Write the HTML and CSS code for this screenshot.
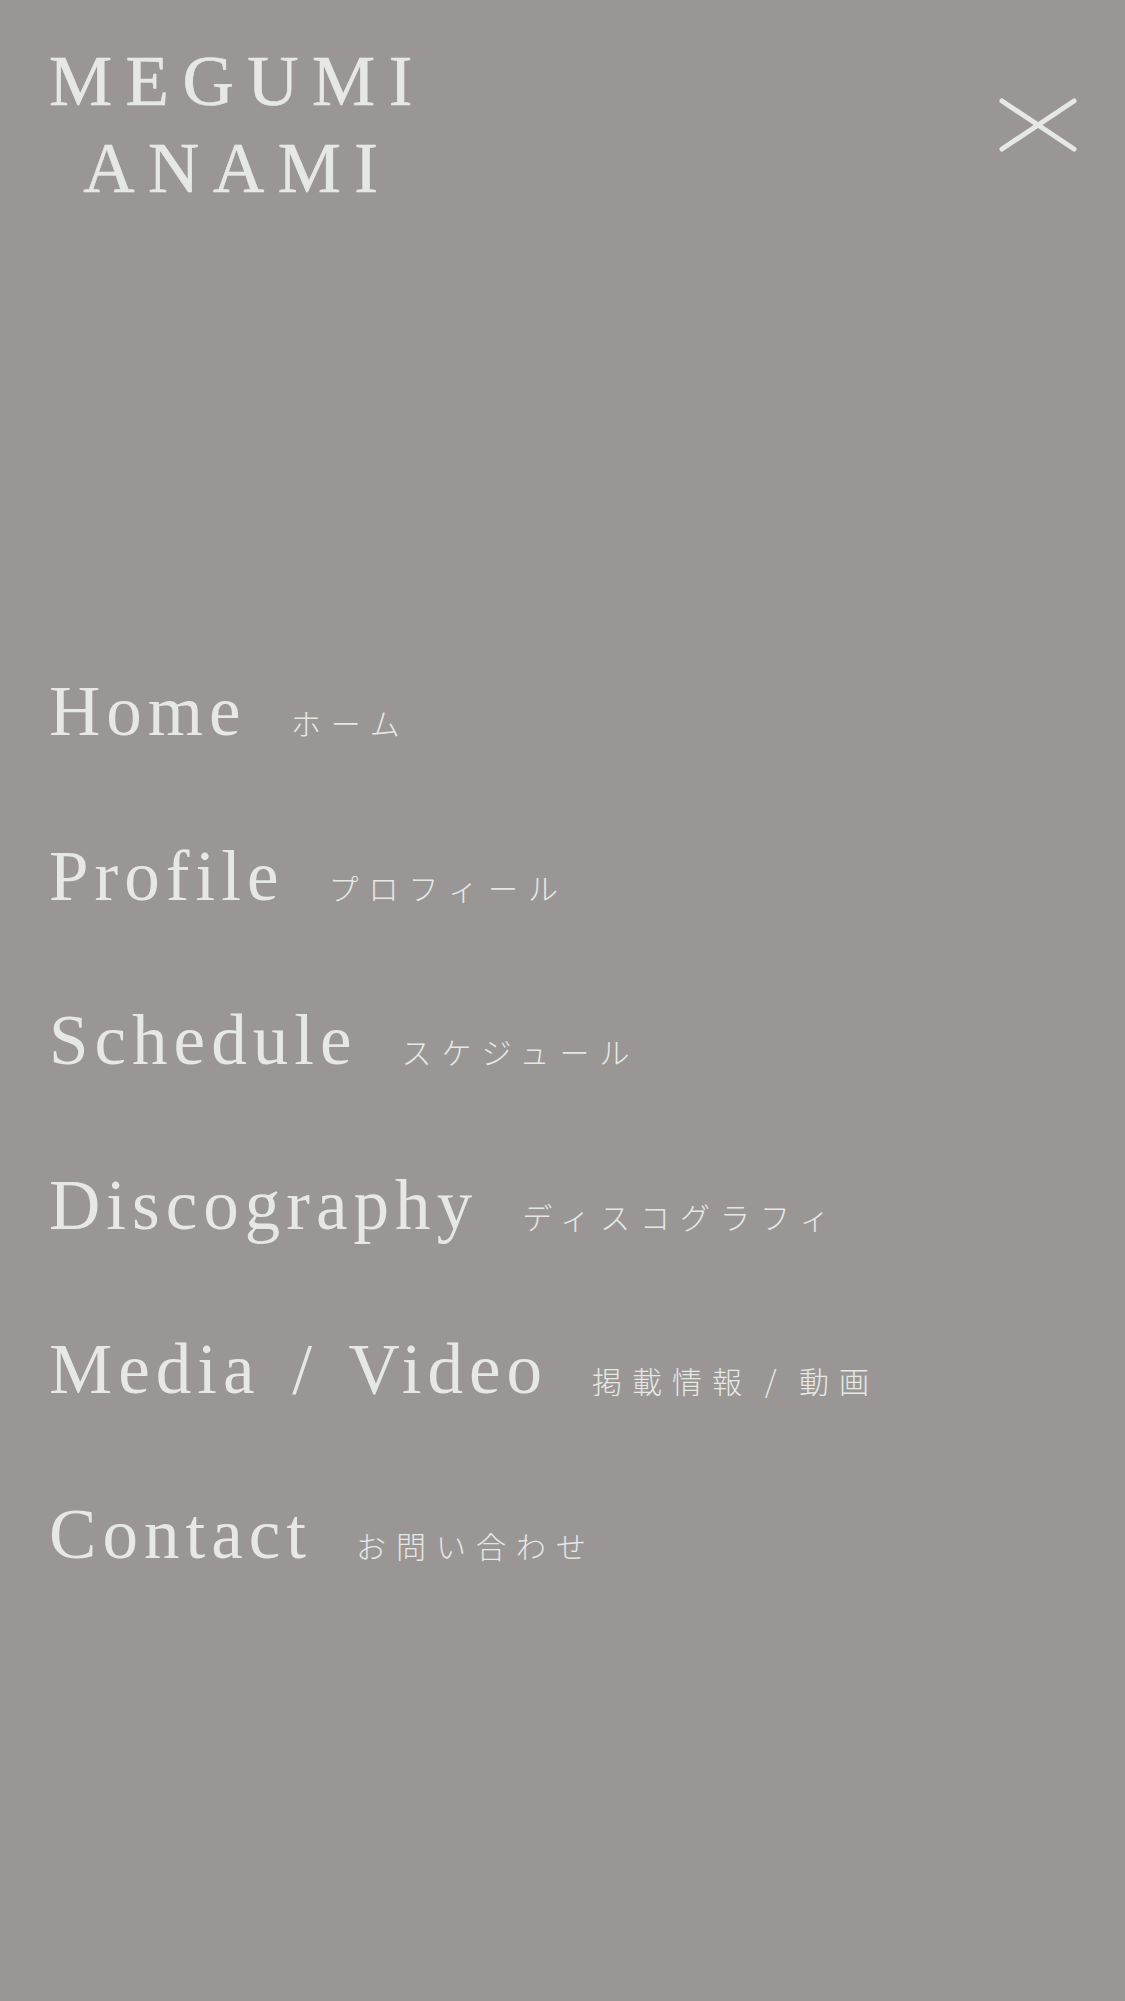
FILE: index.html
```html
<!DOCTYPE html>
<html lang="ja">
<head>
<meta charset="utf-8">
<title>MEGUMI ANAMI</title>
<link rel="stylesheet" href="styles.css">
</head>
<body>
<div class="page">
  <header class="header">
    <div class="logo">
      <span class="logo-line">MEGUMI</span>
      <span class="logo-line">ANAMI</span>
    </div>
    <button class="close" aria-label="close">
      <svg width="80" height="56" viewBox="0 0 80 56">
        <line x1="4" y1="4" x2="76" y2="52" />
        <line x1="76" y1="4" x2="4" y2="52" />
      </svg>
    </button>
  </header>
  <nav class="menu">
    <a class="item"><span class="en">Home</span><span class="ja">ホーム</span></a>
    <a class="item"><span class="en">Profile</span><span class="ja">プロフィール</span></a>
    <a class="item"><span class="en">Schedule</span><span class="ja">スケジュール</span></a>
    <a class="item"><span class="en">Discography</span><span class="ja">ディスコグラフィ</span></a>
    <a class="item"><span class="en">Media / Video</span><span class="ja">掲載情報 / 動画</span></a>
    <a class="item"><span class="en">Contact</span><span class="ja">お問い合わせ</span></a>
  </nav>
</div>
</body>
</html>
```
FILE: styles.css
```css
html, body {
  margin: 0;
  padding: 0;
  background: #9a9695;
}
.page {
  width: 1125px;
  height: 2001px;
  background: #9a9695;
  color: #e6e8e4;
  font-family: "Liberation Serif", "Times New Roman", serif;
  overflow: hidden;
}
.header {
  display: flex;
  justify-content: space-between;
  align-items: flex-start;
  padding: 38px 47px 0 49px;
}
.logo {
  display: inline-flex;
  flex-direction: column;
  align-items: center;
  font-size: 71px;
  line-height: 87px;
  letter-spacing: 0.19em;
  -webkit-text-stroke: 0.6px #e6e8e4;
}
.logo-line {
  display: block;
}
.close {
  margin-top: 59px;
  padding: 0;
  border: 0;
  background: none;
  width: 80px;
  height: 56px;
  display: block;
}
.close svg {
  display: block;
}
.close line {
  stroke: #e6e8e4;
  stroke-width: 5;
  stroke-linecap: round;
}
.menu {
  display: flex;
  flex-direction: column;
  gap: 84.5px;
  margin-top: 459px;
  padding-left: 49px;
}
.item {
  display: flex;
  align-items: baseline;
  height: 80px;
  color: #e6e8e4;
  text-decoration: none;
}
.en {
  font-size: 71px;
  line-height: 80px;
  letter-spacing: 0.085em;
  word-spacing: 8px;
}
.ja {
  margin-left: 44px;
  font-family: "Noto Sans CJK JP", sans-serif;
  font-weight: 300;
  font-size: 30px;
  line-height: 40px;
  letter-spacing: 10px;
  word-spacing: -4px;
}
```
